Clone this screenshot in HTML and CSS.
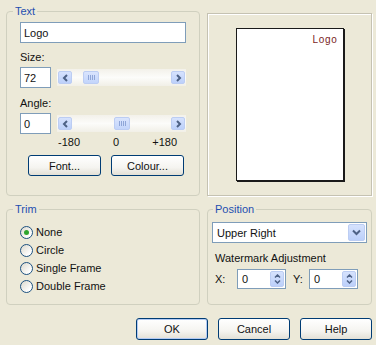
FILE: index.html
```html
<!DOCTYPE html>
<html lang="en">
<head>
  <meta charset="UTF-8">
  <title>Watermark</title>
  <link rel="stylesheet" href="styles.css">
</head>
<body>

  <div class="dialog">

    <fieldset class="group text-group">
      <legend>Text</legend>
      <input class="field name" type="text" value="Logo">

      <div class="cap">Size:</div>
      <div class="slider-row">
        <input class="field num" type="text" value="72">
        <div class="track">
          <span class="arrow"><svg width="7" height="8" viewBox="0 0 7 8"><polyline points="5,1 2,4 5,7" fill="none" stroke="#4d6185" stroke-width="2"/></svg></span>
          <span class="lane"><span class="thumb" style="margin-left: 11px"><i></i><i></i><i></i><i></i></span></span>
          <span class="arrow"><svg width="7" height="8" viewBox="0 0 7 8"><polyline points="2,1 5,4 2,7" fill="none" stroke="#4d6185" stroke-width="2"/></svg></span>
        </div>
      </div>

      <div class="cap angle">Angle:</div>
      <div class="slider-row">
        <input class="field num" type="text" value="0">
        <div class="track">
          <span class="arrow"><svg width="7" height="8" viewBox="0 0 7 8"><polyline points="5,1 2,4 5,7" fill="none" stroke="#4d6185" stroke-width="2"/></svg></span>
          <span class="lane"><span class="thumb" style="margin-left: 42px"><i></i><i></i><i></i><i></i></span></span>
          <span class="arrow"><svg width="7" height="8" viewBox="0 0 7 8"><polyline points="2,1 5,4 2,7" fill="none" stroke="#4d6185" stroke-width="2"/></svg></span>
        </div>
      </div>
      <div class="ticks"><span>-180</span><span>0</span><span>+180</span></div>

      <div class="text-btns">
        <button class="btn">Font...</button>
        <button class="btn">Colour...</button>
      </div>
    </fieldset>

    <div class="preview">
      <div class="page"><span class="mark">Logo</span></div>
    </div>

    <fieldset class="group trim-group">
      <legend>Trim</legend>
      <div class="opt"><span class="radio checked"></span>None</div>
      <div class="opt"><span class="radio"></span>Circle</div>
      <div class="opt"><span class="radio"></span>Single Frame</div>
      <div class="opt"><span class="radio"></span>Double Frame</div>
    </fieldset>

    <fieldset class="group pos-group">
      <legend>Position</legend>
      <div class="select">
        <span class="select-text">Upper Right</span>
        <span class="drop"><svg width="9" height="7" viewBox="0 0 9 7"><polyline points="1,1.5 4.5,5 8,1.5" fill="none" stroke="#4d6185" stroke-width="2"/></svg></span>
      </div>
      <div class="cap adjust">Watermark Adjustment</div>
      <div class="spin-row">
        <span class="axis">X:</span>
        <div class="spin">
          <span class="spin-text">0</span>
          <span class="spin-btn">
            <svg width="7" height="4" viewBox="0 0 7 4"><polyline points="1,3.5 3.5,1 6,3.5" fill="none" stroke="#4d6185" stroke-width="1.5"/></svg>
            <svg width="7" height="4" viewBox="0 0 7 4"><polyline points="1,0.5 3.5,3 6,0.5" fill="none" stroke="#4d6185" stroke-width="1.5"/></svg>
          </span>
        </div>
        <span class="axis y">Y:</span>
        <div class="spin">
          <span class="spin-text">0</span>
          <span class="spin-btn">
            <svg width="7" height="4" viewBox="0 0 7 4"><polyline points="1,3.5 3.5,1 6,3.5" fill="none" stroke="#4d6185" stroke-width="1.5"/></svg>
            <svg width="7" height="4" viewBox="0 0 7 4"><polyline points="1,0.5 3.5,3 6,0.5" fill="none" stroke="#4d6185" stroke-width="1.5"/></svg>
          </span>
        </div>
      </div>
    </fieldset>

    <div class="actions">
      <button class="btn wide default">OK</button>
      <button class="btn wide">Cancel</button>
      <button class="btn wide">Help</button>
    </div>

  </div>

</body>
</html>
```

FILE: styles.css
```css
body {
  background: #ece9d8;
  color: #111;
  font-family: "Liberation Sans", Arial, sans-serif;
  font-size: 11px;
  margin: 0;
  padding: 0;
}
.dialog {
  display: grid;
  grid-template-columns: 194px 165px;
  grid-template-rows: 191px 102px auto;
  column-gap: 7px;
  row-gap: 7px;
  padding: 5px 5px 0 6px;
}
.group {
  box-sizing: border-box;
  margin: 0;
  min-width: 0;
  border: 1px solid #d0d0bf;
  border-radius: 4px;
  padding: 0 13px;
}
.group legend {
  color: #1f4fb0;
  line-height: 13px;
  padding: 0 2px;
  margin-left: -7px;
}
.field {
  box-sizing: border-box;
  height: 21px;
  border: 1px solid #7f9db9;
  background: white;
  color: #111;
  font-family: inherit;
  font-size: 11px;
  padding: 0 3px;
  margin: 0;
  outline: none;
}
.name {
  display: block;
  width: 166px;
  margin-top: 4px;
}
.cap {
  line-height: 13px;
  margin-top: 8px;
}
.cap.angle {
  margin-top: 9px;
}
.slider-row {
  display: flex;
  align-items: center;
  gap: 6px;
  margin-top: 3px;
}
.num {
  width: 31px;
}
.track {
  display: flex;
  align-items: center;
  width: 129px;
  height: 17px;
  padding: 0 1px;
  box-sizing: border-box;
  background: linear-gradient(#f3f1ea, #fcfcfa 50%, #f1efe7);
}
.arrow {
  display: flex;
  justify-content: center;
  align-items: center;
  width: 14px;
  height: 13px;
  box-sizing: border-box;
  border: 1px solid #bccdf3;
  border-radius: 2px;
  background: linear-gradient(#d6e2fd, #bcd0fa);
}
.lane {
  flex: 1;
  display: flex;
  align-items: center;
}
.thumb {
  display: flex;
  justify-content: center;
  align-items: center;
  gap: 1px;
  width: 16px;
  height: 13px;
  box-sizing: border-box;
  border: 1px solid #bccdf3;
  border-radius: 2px;
  background: linear-gradient(#d9e4fd, #c3d5fb);
}
.thumb i {
  display: block;
  width: 1px;
  height: 5px;
  background: #8fa6d8;
}
.ticks {
  display: flex;
  justify-content: space-between;
  width: 119px;
  margin: 2px 0 0 38px;
  line-height: 13px;
}
.text-btns {
  display: flex;
  gap: 10px;
  margin: 6px 0 0 8px;
}
.btn {
  box-sizing: border-box;
  width: 73px;
  height: 21px;
  border: 1px solid #003c74;
  border-radius: 3px;
  background: linear-gradient(#ffffff, #f5f4f0 60%, #e3e0d6);
  font-family: inherit;
  font-size: 11px;
  color: #111;
  padding: 0;
}
.preview {
  box-sizing: border-box;
  height: 183px;
  margin-top: 8px;
  border: 1px solid #c5c2b2;
  box-shadow: inset 1px 1px 0 #fff, 1px 1px 0 #fff;
  display: flex;
  justify-content: center;
  align-items: center;
}
.page {
  box-sizing: border-box;
  width: 108px;
  height: 153px;
  background: white;
  border: 1px solid #1a1a1a;
  box-shadow: 1px 1px 0 #1a1a1a;
  text-align: right;
}
.mark {
  display: block;
  padding: 5px 5px 0 0;
  font-size: 10px;
  line-height: 12px;
  letter-spacing: 0.7px;
  color: #7a1e1e;
}
.trim-group {
  padding-top: 7px;
}
.opt {
  display: flex;
  align-items: center;
  gap: 3px;
  height: 18px;
  line-height: 13px;
}
.radio {
  box-sizing: border-box;
  width: 13px;
  height: 13px;
  border: 1px solid #1c5180;
  border-radius: 50%;
  background: linear-gradient(135deg, #dcd9cd, #ffffff 80%);
  display: flex;
  justify-content: center;
  align-items: center;
}
.radio.checked::after {
  content: "";
  width: 5px;
  height: 5px;
  border-radius: 50%;
  background: #2ea52e;
}
.pos-group {
  padding: 0 4px;
}
.pos-group legend {
  margin-left: 1px;
}
.select {
  display: flex;
  align-items: center;
  box-sizing: border-box;
  height: 21px;
  margin-top: 6px;
  border: 1px solid #7f9db9;
  background: white;
  padding: 1px;
}
.select-text {
  flex: 1;
  padding-left: 3px;
}
.drop {
  display: flex;
  justify-content: center;
  align-items: center;
  box-sizing: border-box;
  width: 17px;
  height: 17px;
  border: 1px solid #bccdf3;
  border-radius: 2px;
  background: linear-gradient(#d6e2fd, #bcd0fa);
}
.cap.adjust {
  margin: 9px 0 0 3px;
}
.spin-row {
  display: flex;
  align-items: center;
  margin: 4px 0 0 3px;
}
.axis {
  width: 22px;
}
.axis.y {
  width: 16px;
  margin-left: 7px;
}
.spin {
  display: flex;
  align-items: center;
  box-sizing: border-box;
  width: 49px;
  height: 20px;
  border: 1px solid #7f9db9;
  background: white;
  padding: 1px;
}
.spin-text {
  flex: 1;
  padding-left: 3px;
}
.spin-btn {
  display: flex;
  flex-direction: column;
  justify-content: center;
  align-items: center;
  gap: 2px;
  box-sizing: border-box;
  width: 14px;
  height: 16px;
  border: 1px solid #bccdf3;
  border-radius: 2px;
  background: linear-gradient(#d6e2fd, #bcd0fa);
}
.actions {
  grid-column: 1 / 3;
  display: flex;
  justify-content: flex-end;
  gap: 10px;
  margin-top: 6px;
}
.btn.wide {
  width: 72px;
  height: 22px;
}
.btn.default {
  box-shadow: inset 0 0 0 1px #b3cbf5;
}
```
